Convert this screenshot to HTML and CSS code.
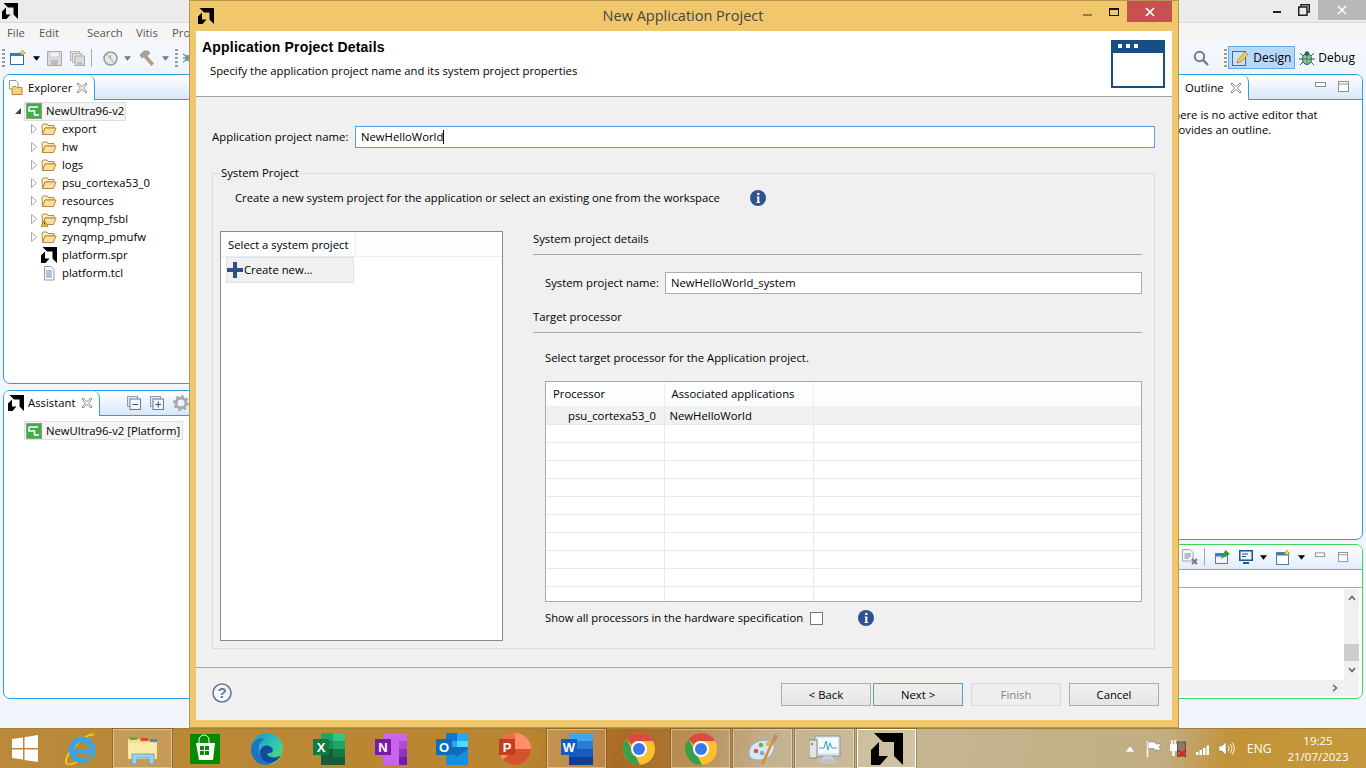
FILE: index.html
```html
<!DOCTYPE html>
<html lang="en">
<head>
<meta charset="utf-8">
<title>New Application Project</title>
<link rel="stylesheet" href="styles.css">
</head>
<body>
<svg class="defs" width="0" height="0" aria-hidden="true">
  <defs>
    <symbol id="amd" viewBox="0 0 32 32"><path d="M3 0H32V32L23 23V9H12Z"/><path d="M0 32V17L8 9V23H17L9 32Z"/></symbol>
    <symbol id="folder" viewBox="0 0 16 16"><path d="M1 4.500 2 3h4l1 1.500h6V7H4L1.500 13.500Z" fill="#fdeec8" stroke="#b58a3c"/><path d="M1.500 13.500 4 7h11l-2.500 6.500Z" fill="#fbdf9f" stroke="#b58a3c"/></symbol>
    <symbol id="platform" viewBox="0 0 16 16"><rect width="16" height="16" fill="#8e9a8e"/><rect x="1" y="1" width="14" height="14" fill="#3fae49"/><path d="M3 4H12M3 4V8H8.500V12H13" fill="none" stroke="#fff" stroke-width="1.500"/></symbol>
    <symbol id="arrow" viewBox="0 0 8 12"><path d="M1.500 1.500 6.500 6 1.500 10.500Z" fill="#fff" stroke="#a8a8a8"/></symbol>
    <symbol id="close" viewBox="0 0 12 12"><path d="M2 1 6 4.500 10 1 11 2 7.500 6 11 10 10 11 6 7.500 2 11 1 10 4.500 6 1 2Z" fill="#fff" stroke="#8a8a8a"/></symbol>
    <symbol id="drop" viewBox="0 0 8 5"><path d="M0 0H8L4 5Z"/></symbol>
    <symbol id="info" viewBox="0 0 16 16"><circle cx="8" cy="8" r="8" fill="#2f5392"/><circle cx="8.300" cy="4" r="1.300" fill="#fff"/><path d="M6.800 6.500H9.300V12H10V13H6.500V12H7.300V7.500H6.800Z" fill="#fff"/></symbol>
    <symbol id="viewmin" viewBox="0 0 12 10"><rect x=".5" y=".5" width="10" height="4" fill="#fff" stroke="#8e8e8e"/></symbol>
    <symbol id="viewmax" viewBox="0 0 12 12"><rect x=".5" y=".5" width="10" height="10" fill="#fff" stroke="#8e8e8e"/><path d="M1 3H10" stroke="#8e8e8e"/></symbol>
    <symbol id="chrome" viewBox="0 0 32 32"><circle cx="16" cy="16" r="16" fill="#fbc02d"/><path d="M16 0A16 16 0 0 1 30 8H16A8 8 0 0 0 8.500 12L3.500 6A16 16 0 0 1 16 0Z" fill="#dd4b3e"/><path d="M3.500 6 10 18 17 31.900A16 16 0 0 1 3.500 6Z" fill="#3a9f4c"/><circle cx="16" cy="16" r="8" fill="#fff"/><circle cx="16" cy="16" r="6" fill="#3b78e7"/></symbol>
  </defs>
</svg>

<main class="desktop">
  <section class="ide">
    <header class="ide-title">
      <svg class="ide-logo" width="16" height="16"><use href="#amd"/></svg>
      <div class="ide-controls">
        <span class="ctl-min"></span>
        <svg class="ctl-restore" width="12" height="12" viewBox="0 0 12 12"><path d="M3 2.500V.75H11.250V8H9M.75 3H9V11.250H.75Z" fill="none" stroke="#222" stroke-width="1.500"/></svg>
        <span class="ctl-close"><svg width="10" height="10" viewBox="0 0 10 10"><path d="M1 1 9 9M9 1 1 9" stroke="#fff" stroke-width="1.500"/></svg></span>
      </div>
    </header>
    <nav class="ide-menu">
      <span class="m-file">File</span><span class="m-edit">Edit</span><span class="m-search">Search</span><span class="m-vitis">Vitis</span><span>Project</span>
    </nav>
    <div class="ide-toolbar">
      <div class="tools-left">
        <span class="grip"></span>
        <svg width="16" height="16" viewBox="0 0 16 16"><rect x=".5" y="3.500" width="13" height="11" fill="#fff" stroke="#2e6da4"/><rect x="1" y="3.500" width="12" height="2.500" fill="#3b7cba"/><path d="M12.500 0 13.500 2 15.500 3 13.500 4 12.500 6 11.500 4 9.500 3 11.500 2Z" fill="#f5d66a" stroke="#a8863a" stroke-width=".6"/></svg>
        <svg width="7" height="5"><use href="#drop"/></svg>
        <svg width="15" height="15" viewBox="0 0 15 15"><path d="M.5.5H14.500V14.500H.5Z" fill="#dcdcdc" stroke="#a9a9a9"/><rect x="3" y="1" width="9" height="5" fill="#f5f5f5" stroke="#b5b5b5" stroke-width=".6"/><rect x="4" y="9" width="7" height="5" fill="#bcbcbc"/></svg>
        <svg width="15" height="15" viewBox="0 0 15 15"><rect x=".5" y=".5" width="9" height="9" fill="#e4e4e4" stroke="#b5b5b5"/><rect x="2.500" y="2.500" width="9" height="9" fill="#e4e4e4" stroke="#b5b5b5"/><rect x="5" y="5" width="9.500" height="9.500" fill="#dcdcdc" stroke="#a9a9a9"/><rect x="7.500" y="11" width="4.500" height="3.500" fill="#bcbcbc"/></svg>
        <span class="tool-sep"></span>
        <svg width="15" height="15" viewBox="0 0 15 15"><circle cx="7.500" cy="7.500" r="6.500" fill="#e8e8e8" stroke="#9a9a9a" stroke-width="1.500"/><path d="M3 3 12 12M7.500 4V8L10 10" stroke="#a5a5a5" fill="none"/></svg>
        <svg width="7" height="5" class="dim"><use href="#drop"/></svg>
        <svg width="16" height="16" viewBox="0 0 16 16"><path d="M1 5 5 1H9L11 3 8 6 14.500 13.500 12.500 15.500 6 8 4.500 7 3 8Z" fill="#a8a296" stroke="#8a7f6c" stroke-width=".6"/><path d="M8 7 14.500 13.500 12.500 15.500 6.500 9Z" fill="#c09a72"/></svg>
        <svg width="7" height="5" class="dim"><use href="#drop"/></svg>
        <span class="grip"></span>
        <svg width="10" height="14" viewBox="0 0 10 14"><circle cx="5" cy="7" r="3" fill="#6c9a84"/><path d="M0 3 3 5M0 11 3 9M0 7H2" stroke="#3b6b58"/></svg>
      </div>
      <div class="tools-right">
        <svg class="search" width="16" height="16" viewBox="0 0 16 16"><circle cx="6.500" cy="6.500" r="4.700" fill="none" stroke="#7a7a7a" stroke-width="2"/><path d="M10 10 15 15" stroke="#7a7a7a" stroke-width="2.400"/></svg>
        <span class="grip grip-right"></span>
        <span class="persp persp-on">
          <svg width="18" height="18" viewBox="0 0 18 18"><rect x=".5" y="2.500" width="13" height="14" fill="#cfe3f7" stroke="#3f6ea3"/><path d="M5 14 6 10.500 13 3 16 5.500 9 13Z" fill="#f3c85f" stroke="#9c7a2c" stroke-width=".7"/></svg>
          Design
        </span>
        <span class="persp">
          <svg width="16" height="16" viewBox="0 0 16 16"><path d="M1 3 4 6M15 3 12 6M0 9H3M13 9H16M1 15 4 12M15 15 12 12" stroke="#2f6048"/><ellipse cx="8" cy="9" rx="4.500" ry="5.500" fill="#86c79a" stroke="#2f6048"/><circle cx="8" cy="3.500" r="2.200" fill="#2f6048"/><path d="M8 5V14M4 9H12" stroke="#2f6048" stroke-width=".7"/></svg>
          Debug
        </span>
      </div>
    </div>

    <div class="workspace">
      <div class="stack">
        <article class="panel panel-explorer">
          <div class="panel-head">
            <div class="tab">
              <svg width="16" height="16" viewBox="0 0 16 16"><path d="M1.500.5H8L10 2.500V9H1.500Z" fill="#fff" stroke="#8a9ab0"/><path d="M4 8 5 6.500H8L9 7.500H14V14.500H4Z" fill="#f6d27e" stroke="#b58a3c"/></svg>
              <span>Explorer</span>
              <svg class="x" width="12" height="12"><use href="#close"/></svg>
            </div>
          </div>
          <div class="tree">
            <div class="tree-root">
              <svg class="twist" width="6" height="6" viewBox="0 0 6 6"><path d="M6 0V6H0Z" fill="#444"/></svg>
              <span class="selected"><svg width="16" height="16"><use href="#platform"/></svg>NewUltra96-v2</span>
            </div>
            <div class="tree-item"><svg class="ar" width="8" height="12"><use href="#arrow"/></svg><svg width="16" height="16"><use href="#folder"/></svg><span>export</span></div>
            <div class="tree-item"><svg class="ar" width="8" height="12"><use href="#arrow"/></svg><svg width="16" height="16"><use href="#folder"/></svg><span>hw</span></div>
            <div class="tree-item"><svg class="ar" width="8" height="12"><use href="#arrow"/></svg><svg width="16" height="16"><use href="#folder"/></svg><span>logs</span></div>
            <div class="tree-item"><svg class="ar" width="8" height="12"><use href="#arrow"/></svg><svg width="16" height="16"><use href="#folder"/></svg><span>psu_cortexa53_0</span></div>
            <div class="tree-item"><svg class="ar" width="8" height="12"><use href="#arrow"/></svg><svg width="16" height="16"><use href="#folder"/></svg><span>resources</span></div>
            <div class="tree-item"><svg class="ar" width="8" height="12"><use href="#arrow"/></svg><svg width="16" height="16" viewBox="0 0 16 16"><use href="#folder"/><path d="M3.500 9 7 15.500H0Z" fill="#f2c230" stroke="#8a6d1c" stroke-width=".6"/><path d="M3.500 11.500V13.500" stroke="#333"/></svg><span>zynqmp_fsbl</span></div>
            <div class="tree-item"><svg class="ar" width="8" height="12"><use href="#arrow"/></svg><svg width="16" height="16"><use href="#folder"/></svg><span>zynqmp_pmufw</span></div>
            <div class="tree-item"><i class="ar-blank"></i><svg width="16" height="16"><use href="#amd"/></svg><span>platform.spr</span></div>
            <div class="tree-item"><i class="ar-blank"></i><svg width="16" height="16" viewBox="0 0 16 16"><path d="M3.500 1.500H10L13 4.500V15H3.500Z" fill="#fff" stroke="#8a9ab8"/><path d="M5 6H11M5 8H11M5 10H11M5 12H11" stroke="#6c86b0"/></svg><span>platform.tcl</span></div>
          </div>
        </article>
        <article class="panel panel-assistant">
          <div class="panel-head">
            <div class="tab tab-assistant">
              <svg width="16" height="16"><use href="#amd"/></svg>
              <span>Assistant</span>
              <svg class="x" width="12" height="12"><use href="#close"/></svg>
            </div>
            <div class="view-tools">
              <svg width="14" height="14" viewBox="0 0 14 14"><rect x=".5" y=".5" width="10" height="10" fill="#dfe8f2" stroke="#8a9fb8"/><rect x="3" y="3" width="10.500" height="10.500" fill="#f4f7fb" stroke="#5f7ea3"/><path d="M5.500 8.500H11" stroke="#2f5392"/></svg>
              <svg width="14" height="14" viewBox="0 0 14 14"><rect x=".5" y=".5" width="10" height="10" fill="#dfe8f2" stroke="#8a9fb8"/><rect x="3" y="3" width="10.500" height="10.500" fill="#f4f7fb" stroke="#5f7ea3"/><path d="M5.500 8.500H11M8.250 5.500V11.500" stroke="#2f5392"/></svg>
              <svg width="16" height="16" viewBox="0 0 16 16"><circle cx="8" cy="8" r="5" fill="none" stroke="#a8a8a8" stroke-width="3"/><circle cx="8" cy="8" r="7" fill="none" stroke="#a8a8a8" stroke-width="2" stroke-dasharray="2.500 3"/></svg>
            </div>
          </div>
          <div class="assistant-body">
            <span class="selected sel-wide"><svg width="16" height="16"><use href="#platform"/></svg>NewUltra96-v2 [Platform]</span>
          </div>
        </article>
      </div>

      <div class="stack stack-right">
        <article class="panel panel-outline">
          <div class="panel-head">
            <div class="tab tab-outline">
              <span>Outline</span>
              <svg class="x" width="12" height="12"><use href="#close"/></svg>
            </div>
            <div class="view-btns">
              <svg width="12" height="10"><use href="#viewmin"/></svg>
              <svg width="12" height="12"><use href="#viewmax"/></svg>
            </div>
          </div>
          <p class="outline-msg">There is no active editor that provides an outline.</p>
        </article>
        <article class="panel panel-console">
          <div class="console-head">
            <svg width="17" height="16" viewBox="0 0 17 16"><path d="M.5.5H8L11 3.500V12H.5Z" fill="#f6f6f6" stroke="#9aa7bd"/><path d="M2.500 5H9M2.500 7H9M2.500 9H7" stroke="#6c86b0"/><path d="M10 10 15 15M15 10 10 15" stroke="#777" stroke-width="2"/></svg>
            <span class="tool-sep tall"></span>
            <svg width="15" height="14" viewBox="0 0 15 14"><rect x=".5" y="3.500" width="12" height="10" fill="#f4f7fb" stroke="#4b7fb0"/><rect x="1" y="4" width="11" height="2.500" fill="#3b7cba"/><path d="M5 9 8 5.500 9 2.500 10.500 0 15 4 12 5.500 9.500 7Z" fill="#2e9b3f"/></svg>
            <svg width="14" height="14" viewBox="0 0 14 14"><rect x=".75" y=".75" width="12.500" height="9.500" fill="#eaf1f8" stroke="#22558c" stroke-width="1.500"/><path d="M3 4H9M3 6.500H7" stroke="#22558c"/><path d="M4 13H10" stroke="#22558c" stroke-width="2"/></svg>
            <svg width="7" height="5"><use href="#drop"/></svg>
            <svg width="15" height="15" viewBox="0 0 15 15"><rect x=".5" y="2.500" width="12" height="12" fill="#fff" stroke="#4b7fb0"/><rect x="1" y="3" width="11" height="2.500" fill="#3b7cba"/><path d="M11 0 12 2 14 3 12 4 11 6 10 4 8 3 10 2Z" fill="#f5d66a" stroke="#a8863a" stroke-width=".6"/></svg>
            <svg width="7" height="5"><use href="#drop"/></svg>
            <svg width="11" height="10"><use href="#viewmin"/></svg>
            <svg width="11" height="11"><use href="#viewmax"/></svg>
          </div>
          <div class="console-sub"></div>
          <div class="console-main">
            <div class="console-view">
              <div class="console-text"></div>
              <div class="vscroll">
                <svg width="8" height="6" viewBox="0 0 8 6"><path d="M1 5 4 1.500 7 5" fill="none" stroke="#666" stroke-width="1.600"/></svg>
                <span class="vthumb"></span>
                <svg width="8" height="6" viewBox="0 0 8 6"><path d="M1 1 4 4.500 7 1" fill="none" stroke="#666" stroke-width="1.600"/></svg>
              </div>
            </div>
            <div class="hscroll"><svg width="6" height="8" viewBox="0 0 6 8"><path d="M1 1 4.500 4 1 7" fill="none" stroke="#666" stroke-width="1.600"/></svg></div>
          </div>
        </article>
      </div>
    </div>
  </section>

  <section class="taskbar">
    <div class="start"><svg width="26" height="27" viewBox="0 0 26 27"><path d="M0 4 11 2.500V13H0ZM12.500 2.200 26 0V13H12.500ZM0 14.500H11V24.500L0 23ZM12.500 14.500H26V27L12.500 25Z" fill="#fff"/></svg></div>
    <div class="task">
      <svg width="32" height="32" viewBox="0 0 32 32"><path d="M29 2C25 0 18 5 10 13 3 20 -1 28 2 31 5 33 12 29 17 25" fill="none" stroke="#f3c515" stroke-width="2"/><circle cx="17" cy="17" r="10.500" fill="none" stroke="#38a5e6" stroke-width="5.500"/><path d="M9 16.500H27V20H9Z" fill="#38a5e6"/><path d="M20 25H30L28 21H21Z" fill="#38a5e6"/><path d="M18 26 25 21 28 22 22 27Z" fill="#b98a3a"/></svg>
    </div>
    <div class="task run">
      <svg width="32" height="32" viewBox="0 0 32 32"><path d="M1 6H12L14 8H30V26H1Z" fill="#f3dc94"/><path d="M3 4H10V7H3Z" fill="#4fb34f"/><path d="M14 5H21V8H14Z" fill="#d64a3a"/><path d="M23 6H30V9H23Z" fill="#3a8fd6"/><path d="M1 10H30L29 26H2Z" fill="#fbeaa8"/><path d="M5 31V21H27V31H22V25H10V31Z" fill="#9cd0ec" stroke="#4f93bf" stroke-width=".7"/></svg>
    </div>
    <div class="task">
      <svg width="30" height="30" viewBox="0 0 30 30"><rect width="30" height="30" fill="#078a00"/><path d="M9 9V6A5 5 0 0 1 19 6V9" fill="none" stroke="#fff"/><path d="M6 9H25L23 26H9Z" fill="#fff"/><path d="M10 12H14V16H10ZM15 12H19V16H15ZM10 17H14V21H10ZM15 17H19V21H15Z" fill="#078a00"/></svg>
    </div>
    <div class="task">
      <svg width="32" height="32" viewBox="0 0 32 32"><defs><linearGradient id="edgeA" x1="0" y1="0" x2="1" y2="1"><stop offset="0" stop-color="#1f8fd0"/><stop offset=".55" stop-color="#30c6b0"/><stop offset="1" stop-color="#74d94a"/></linearGradient></defs><circle cx="16" cy="16" r="16" fill="url(#edgeA)"/><path d="M0 16C0 8 8 4 14 6 9 8 7 12 8 18 9 26 18 29 26 26 22 30 18 32 15 32 6 32 0 25 0 16Z" fill="#1b74c4"/><path d="M9 19C9 13 17 10 21 15 23 18 21 20 18 20 15 20 16 23 20 24 24 25 28 24 30 22 27 28 21 31 15 29 11 27 9 23 9 19Z" fill="#124a9c"/></svg>
    </div>
    <div class="task">
      <svg width="32" height="32" viewBox="0 0 32 32"><rect x="8" width="24" height="32" fill="#21a366"/><rect x="20" width="12" height="8" fill="#33c481"/><rect x="20" y="8" width="12" height="8" fill="#21a366"/><rect x="8" y="8" width="12" height="8" fill="#1b8a55"/><rect x="20" y="16" width="12" height="8" fill="#107c41"/><rect x="8" y="16" width="12" height="16" fill="#185c37"/><rect x="20" y="24" width="12" height="8" fill="#185c37"/><rect y="6" width="16" height="16" fill="#107c41"/><text class="app-letter" x="8" y="19">X</text></svg>
    </div>
    <div class="task">
      <svg width="32" height="32" viewBox="0 0 32 32"><rect x="8" width="24" height="32" fill="#ca64ea"/><rect x="24" y="8" width="8" height="8" fill="#ae4bd5"/><rect x="24" y="16" width="8" height="8" fill="#9332bf"/><rect x="24" y="24" width="8" height="8" fill="#7719aa"/><rect y="6" width="16" height="16" fill="#7719aa"/><text class="app-letter" x="8" y="19">N</text></svg>
    </div>
    <div class="task">
      <svg width="34" height="32" viewBox="0 0 34 32"><rect x="10" width="22" height="16" fill="#0a78d4"/><rect x="21" width="11" height="8" fill="#28a8ea"/><rect x="10" y="8" width="11" height="8" fill="#28a8ea"/><rect x="21" y="8" width="11" height="8" fill="#50d9ff"/><path d="M10 14H32V32H10Z" fill="#0f6cbd"/><path d="M10 16 21 24 32 16V32H10Z" fill="#1490df"/><rect y="6" width="16" height="16" fill="#0f6cbd"/><text class="app-letter" x="8" y="19">O</text></svg>
    </div>
    <div class="task">
      <svg width="32" height="32" viewBox="0 0 32 32"><circle cx="16" cy="16" r="16" fill="#ff8f6b"/><path d="M16 16H32A16 16 0 0 1 4 26.500L16 16Z" fill="#d35230"/><path d="M16 16V0A16 16 0 0 0 0 16Z" fill="#ed6c47"/><rect y="6" width="16" height="16" fill="#c43e1c"/><text class="app-letter" x="8" y="19">P</text></svg>
    </div>
    <div class="task run">
      <svg width="32" height="32" viewBox="0 0 32 32"><rect x="8" width="24" height="8" fill="#41a5ee"/><rect x="8" y="8" width="24" height="8" fill="#2b7cd3"/><rect x="8" y="16" width="24" height="8" fill="#185abd"/><rect x="8" y="24" width="24" height="8" fill="#103f91"/><rect y="6" width="16" height="16" fill="#185abd"/><text class="app-letter" x="8" y="19">W</text></svg>
    </div>
    <div class="task"><svg width="32" height="32"><use href="#chrome"/></svg></div>
    <div class="task run"><svg width="32" height="32"><use href="#chrome"/></svg></div>
    <div class="task run">
      <svg width="32" height="32" viewBox="0 0 32 32"><path d="M2 19C2 11 14 5 22 8 29 11 28 17 24 22 19 28 8 28 4 25 2 24 2 21 2 19Z" fill="#d5e7f5" stroke="#8fb0cc"/><circle cx="9" cy="18" r="2.300" fill="#d85a46"/><circle cx="14" cy="12" r="2.300" fill="#6fb04a"/><circle cx="21" cy="11" r="2.300" fill="#e5b73b"/><circle cx="15" cy="20" r="2.300" fill="#8da9c2"/><path d="M14 31 25 7 27 8 17 31Z" fill="#dd8c2c"/><path d="M25 8 28 1 31 3 28 9Z" fill="#b98c5c"/></svg>
    </div>
    <div class="task run">
      <svg width="32" height="32" viewBox="0 0 32 32"><rect x="6" y="3" width="25" height="20" fill="#dfe6ec" stroke="#8b98a4"/><rect x="9" y="5" width="20" height="15" fill="#f4fbff"/><path d="M10 15H15L17 8 19 17 21 10 23 15H28" fill="none" stroke="#3a9bd6"/><path d="M11 28 15 23H22L27 28Z" fill="#c9cfd4"/><ellipse cx="18" cy="28.500" rx="9" ry="2.500" fill="#bcc3c9"/><rect y="7" width="8" height="18" fill="#e4e4e4" stroke="#888"/><circle cx="3" cy="11" r="1.200" fill="#4db34d"/></svg>
    </div>
    <div class="task run run-top"><svg width="32" height="32"><use href="#amd"/></svg></div>

    <div class="tray">
      <svg width="10" height="6" viewBox="0 0 10 6"><path d="M0 6 5 0 10 6Z" fill="#fff" stroke="#8a8a8a" stroke-width=".5"/></svg>
      <svg width="16" height="16" viewBox="0 0 16 16"><path d="M1.500 0V16" stroke="#fff" stroke-width="1.500"/><path d="M2 1H9L10 3H15.500L13 6 15 9H9L8 7.500H2Z" fill="#fff" stroke="#555" stroke-width=".4"/></svg>
      <svg width="17" height="17" viewBox="0 0 17 17"><path d="M2 0V4M5 0V4" stroke="#fff" stroke-width="1.500"/><rect x="0" y="4" width="7" height="7" fill="#fff"/><path d="M3.500 10V16" stroke="#fff" stroke-width="2.500"/><rect x="7.500" y="2" width="8" height="14" fill="#8a7a62" stroke="#5d5346"/><path d="M8 10 16 17M16 10 8 17" stroke="#e02020" stroke-width="2"/></svg>
      <svg width="15" height="12" viewBox="0 0 15 12"><path d="M0 9H2.500V12H0ZM3.500 7H6V12H3.500ZM7 5H9.500V12H7ZM10.500 2.500H13V12H10.500Z" fill="#fff"/></svg>
      <svg width="16" height="15" viewBox="0 0 16 15"><path d="M0 5H3L7 1V14L3 10H0Z" fill="#fff" stroke="#777" stroke-width=".5"/><path d="M9 5C10.500 6.500 10.500 8.500 9 10M11 3C13.500 6 13.500 9 11 12M13 1.500C16 5 16 10 13 13.500" fill="none" stroke="#fff"/></svg>
      <span class="lang">ENG</span>
      <span class="clock"><span>19:25</span><span>21/07/2023</span></span>
    </div>
  </section>

  <section class="dialog" aria-label="New Application Project">
    <header class="dlg-title">
      <svg class="dlg-logo" width="16" height="16"><use href="#amd"/></svg>
      <span class="dlg-name">New Application Project</span>
      <div class="dlg-controls">
        <span class="dlg-min"></span>
        <span class="dlg-max"></span>
        <span class="dlg-close"><svg width="10" height="10" viewBox="0 0 10 10"><path d="M1 1 9 9M9 1 1 9" stroke="#fff" stroke-width="1.700"/></svg></span>
      </div>
    </header>
    <div class="dlg-inner">
      <div class="dlg-banner">
        <div class="banner-text">
          <h1>Application Project Details</h1>
          <p>Specify the application project name and its system project properties</p>
        </div>
        <svg class="banner-icon" width="54" height="48" viewBox="0 0 54 48"><rect x="1" y="1" width="52" height="46" fill="#fff" stroke="#174f85" stroke-width="2"/><rect width="54" height="13" fill="#174f85"/><path d="M7 4H11V8H7ZM15 4H19V8H15ZM23 4H27V8H23Z" fill="#fff"/></svg>
      </div>
      <div class="dlg-body">
        <div class="name-row">
          <label>Application project name:</label>
          <div class="input input-focus"><span>NewHelloWorld</span><i class="caret"></i></div>
        </div>
        <fieldset class="sys">
          <legend>System Project</legend>
          <div class="sys-intro">
            <span>Create a new system project for the application or select an existing one from the workspace</span>
            <svg width="16" height="16"><use href="#info"/></svg>
          </div>
          <div class="sys-cols">
            <div class="list">
              <div class="list-head"><span>Select a system project</span></div>
              <div class="list-row">
                <svg width="16" height="16" viewBox="0 0 16 16"><path d="M6 0H10V6H16V10H10V16H6V10H0V6H6Z" fill="#2f4f86"/></svg>
                <span>Create new...</span>
              </div>
            </div>
            <div class="details">
              <div class="sec-title">System project details</div>
              <div class="sys-name">
                <label>System project name:</label>
                <div class="input"><span>NewHelloWorld_system</span></div>
              </div>
              <div class="sec-title sec-second">Target processor</div>
              <p class="select-note">Select target processor for the Application project.</p>
              <div class="proc-wrap">
                <table class="proc">
                  <colgroup><col class="c1"><col class="c2"><col></colgroup>
                  <thead><tr><th>Processor</th><th>Associated applications</th><th></th></tr></thead>
                  <tbody>
                    <tr class="sel"><td class="indent">psu_cortexa53_0</td><td>NewHelloWorld</td><td></td></tr>
                    <tr><td></td><td></td><td></td></tr>
                    <tr><td></td><td></td><td></td></tr>
                    <tr><td></td><td></td><td></td></tr>
                    <tr><td></td><td></td><td></td></tr>
                    <tr><td></td><td></td><td></td></tr>
                    <tr><td></td><td></td><td></td></tr>
                    <tr><td></td><td></td><td></td></tr>
                    <tr><td></td><td></td><td></td></tr>
                    <tr><td></td><td></td><td></td></tr>
                    <tr><td></td><td></td><td></td></tr>
                  </tbody>
                </table>
              </div>
              <div class="show-all">
                <span>Show all processors in the hardware specification</span>
                <i class="check"></i>
                <svg width="16" height="16"><use href="#info"/></svg>
              </div>
            </div>
          </div>
        </fieldset>
      </div>
      <footer class="dlg-foot">
        <svg width="20" height="20" viewBox="0 0 20 20"><circle cx="10" cy="10" r="9" fill="#f5f7fa" stroke="#5f7a9a" stroke-width="1.600"/><text class="help-q" x="10" y="15">?</text></svg>
        <div class="btns">
          <button>&lt; Back</button>
          <button class="primary">Next &gt;</button>
          <button class="off" disabled>Finish</button>
          <button>Cancel</button>
        </div>
      </footer>
    </div>
  </section>
</main>
</body>
</html>
```
FILE: styles.css
```css
* { box-sizing: border-box; }
html, body { margin: 0; padding: 0; }
body {
  width: 1366px;
  height: 768px;
  overflow: hidden;
  font-family: "Open Sans", "Liberation Sans", sans-serif;
  font-size: 11.3px;
  line-height: 16px;
  color: #000;
}
svg { display: block; flex: none; }
.defs { position: absolute; }
.desktop { position: relative; width: 1366px; height: 768px; display: flex; flex-direction: column; }

/* background IDE */
.ide { height: 728px; background: #f1f6fd; display: flex; flex-direction: column; }
.ide-title { height: 23px; background: #ebebeb; border-bottom: 1px solid #d9d9d9; display: flex; justify-content: space-between; }
.ide-logo { margin: 3px 0 0 2px; }
.ide-controls { display: flex; align-items: flex-start; }
.ctl-min { width: 8px; height: 2px; background: #222; margin: 11px 17px 0 0; }
.ctl-restore { margin: 4px 8px 0 0; }
.ctl-close { width: 48px; height: 20px; background: #b8b8b8; display: flex; align-items: center; justify-content: center; }
.ide-menu { height: 19px; background: #f5f5f5; color: #555; display: flex; align-items: center; padding-left: 7px; }
.m-file { width: 32px; }
.m-edit { width: 48px; }
.m-search { width: 49px; }
.m-vitis { width: 36px; }
.ide-toolbar { height: 32px; background: linear-gradient(#f5f8fd, #f0f5fc); display: flex; justify-content: space-between; align-items: center; padding: 0 5px 0 2px; }
.tools-left {
  display: grid;
  grid-template-columns: 8px 23px 14px 23px 21px 12px 21px 15px 23px 13px 8px auto;
  align-items: center;
}
.dim { fill: #777; }
.grip { width: 3px; height: 18px; background: repeating-linear-gradient(#9a9a9a 0 2px, transparent 2px 4px); }
.tool-sep { width: 1px; height: 18px; background: #a9a9a9; }
.tool-sep.tall { height: 18px; }
.tools-right { display: flex; align-items: center; margin-top: -1px; }
.search { margin-right: 15px; }
.grip-right { margin-right: 1px; }
.persp { display: flex; align-items: center; gap: 3px; height: 23px; padding: 0 6px 0 3px; font-size: 12px; }
.persp-on { width: 67px; background: #b7d9f9; border: 1px solid #6aa6e0; margin-right: 1px; }

.workspace { flex: 1; display: flex; justify-content: space-between; padding: 0 3px 29px; }
.stack { width: 240px; display: flex; flex-direction: column; gap: 6px; }
.stack-right { width: 203px; gap: 4px; }
.panel { background: #fff; border: 1px solid #2b9fe6; border-radius: 7px; display: flex; flex-direction: column; overflow: hidden; }
.panel-explorer { height: 310px; }
.panel-assistant { height: 309px; }
.panel-outline { height: 466px; }
.panel-console { height: 155px; border-color: #3fd75a; }
.panel-head { height: 25px; background: linear-gradient(#fff, #d9e7f9); display: flex; justify-content: space-between; border-bottom: 1px solid #2b9fe6; }
.tab { width: 91px; height: 25px; background: #fff; border-right: 1px solid #2b9fe6; border-radius: 0 7px 0 0; display: flex; align-items: center; padding-left: 4px; gap: 4px; }
.tab .x { margin: 0 6px 0 auto; }
.tab-assistant { width: 96px; padding-bottom: 1px; }
.view-tools { display: flex; align-items: center; gap: 9px; margin-right: 53px; }
.tab-outline { width: 88px; padding-left: 24px; }
.view-btns { display: flex; align-items: center; gap: 11px; margin-right: 12px; }

.tree { padding-top: 2px; }
.tree-root { height: 18px; display: flex; align-items: center; padding-left: 11px; }
.twist { margin-right: 3px; }
.selected { display: flex; align-items: center; gap: 4px; height: 19px; padding: 0 1px; background: #f5f5f5; border: 1px solid #dedede; }
.sel-wide { padding-right: 2px; }
.tree-item { height: 18px; display: flex; align-items: center; padding-left: 26px; }
.tree-item .ar, .ar-blank { width: 8px; margin-right: 3px; }
.tree-item span { margin-left: 5px; }
.assistant-body { padding: 5px 0 0 20px; display: flex; }

.outline-msg { margin: 7px 0 0 6px; width: 170px; line-height: 15px; }

.console-head { height: 25px; background: linear-gradient(#fff, #e2ecfa); border-bottom: 1px solid #3fd75a; display: grid; grid-template-columns: 22px 11px 24px 21px 16px 22px 17px 23px 11px; align-items: center; padding-left: 21px; }
.console-sub { height: 18px; border-bottom: 1px solid #a9a9a9; flex: none; }
.console-main { flex: 1; display: flex; flex-direction: column; margin-right: 3px; padding-bottom: 2px; min-height: 0; }
.console-view { flex: 1; display: flex; min-height: 0; }
.console-text { flex: 1; }
.vscroll { width: 15px; background: #f0f0f0; display: flex; flex-direction: column; align-items: center; padding: 6px 0 7px; margin-top: 1px; }
.vthumb { width: 15px; height: 17px; background: #cdcdcd; margin-top: auto; margin-bottom: 6px; }
.hscroll { height: 16px; background: #f0f0f0; display: flex; align-items: center; justify-content: flex-end; padding-right: 21px; flex: none; }

/* taskbar */
.taskbar {
  height: 40px;
  display: flex;
  align-items: center;
  background: linear-gradient(100deg, #b98a3a 0, #bb8530 520px, #a96b24 620px, #ad7a35 690px, #b8a27a 760px, #c6b591 900px, #c2ad84 1150px, #c29336 1215px, #c69a3e 1366px);
  border-top: 1px solid #a38038;
}
.start { width: 51px; padding-left: 12px; }
.task { width: 59px; height: 39px; margin-right: 3px; display: flex; align-items: center; justify-content: center; border: 1px solid transparent; }
.task.run { background: rgba(255, 255, 255, .16); border: 1.500px solid rgba(255, 240, 210, .45); outline: 1px solid rgba(90, 60, 20, .35); }
.task.run-top { background: rgba(255, 255, 255, .2); border: 1.500px solid #fff; }
.app-letter { font-family: "Liberation Sans", sans-serif; font-weight: 700; font-size: 13px; fill: #fff; text-anchor: middle; }
.tray { flex: 1; display: flex; align-items: center; justify-content: flex-end; color: #fff; }
.tray svg:nth-child(1) { margin-right: 11px; }
.tray svg:nth-child(2) { margin-right: 8px; }
.tray svg:nth-child(3) { margin-right: 9px; }
.tray svg:nth-child(4) { margin-right: 8px; }
.lang { font-size: 12px; margin-left: 12px; width: 24px; }
.clock { width: 94px; margin-right: 1px; padding-top: 1px; display: flex; flex-direction: column; align-items: center; font-size: 11.500px; line-height: 16px; }

/* dialog window */
.dialog {
  position: absolute;
  left: 189px;
  top: 0;
  width: 990px;
  height: 728px;
  background: #f0c86b;
  border: 1px solid #b5964f;
  padding: 0 6px 7px;
  display: flex;
  flex-direction: column;
}
.dlg-title { height: 30px; position: relative; display: flex; align-items: center; justify-content: center; flex: none; }
.dlg-logo { position: absolute; left: 2px; top: 7px; }
.dlg-name { font-size: 14.500px; color: #444; margin-left: -2px; }
.dlg-controls { position: absolute; right: 0; top: 0; display: flex; align-items: flex-start; }
.dlg-min { width: 9px; height: 2px; background: #8a7a4c; margin: 13px 17px 0 0; }
.dlg-max { width: 10px; height: 8px; border: 1px solid #111; border-top-width: 2px; margin: 7px 8px 0 0; }
.dlg-close { width: 45px; height: 21px; background: #c75050; display: flex; align-items: center; justify-content: center; }
.dlg-inner { flex: 1; background: #f0f0f0; display: flex; flex-direction: column; min-height: 0; }
.dlg-banner { height: 66px; background: #fff; border-bottom: 1px solid #a0a0a0; padding: 8px 7px 0 6px; display: flex; justify-content: space-between; flex: none; }
.banner-text h1 { margin: 0; font-family: "Liberation Sans", sans-serif; font-size: 14px; letter-spacing: .2px; line-height: 16px; font-weight: 700; }
.banner-text p { margin: 8px 0 0 8px; }
.banner-icon { margin-top: 1px; }
.dlg-body { height: 570px; padding: 29px 17px 0 16px; flex: none; }
.name-row { height: 22px; display: flex; align-items: center; gap: 5px; }
.name-row label { width: 138px; letter-spacing: .07px; }
.input { flex: 1; height: 22px; background: #fff; border: 1px solid #ababab; display: flex; align-items: center; padding-left: 5px; }
.input-focus { border-color: #569de5; }
.caret { width: 1px; height: 14px; background: #000; }
.sys { margin: 17px 0 0; padding: 0; height: 484px; border: 1px solid #dcdcdc; min-width: 0; }
.sys legend { margin-left: 7px; padding: 0 1px; }
.sys-intro { display: flex; align-items: center; height: 16px; margin-top: 9px; padding-left: 22px; }
.sys-intro span { width: 515px; letter-spacing: -.02px; }
.sys-cols { display: flex; gap: 30px; margin-top: 25px; padding-left: 7px; height: 410px; }
.list { width: 283px; background: #fff; border: 1px solid #8a8a8a; }
.list-head { height: 25px; background: #fcfdff; border-bottom: 1px solid #e6eef9; display: flex; }
.list-head span { width: 135px; padding: 5px 0 0 7px; border-right: 1px solid #e6eef9; }
.list-row { width: 128px; height: 26px; margin-left: 5px; background: #f0f0f0; border: 1px solid #e2e2e2; display: flex; align-items: center; gap: 1px; }
.details { width: 609px; }
.sec-title { height: 24px; border-bottom: 1px solid #a9a9a9; }
.sec-second { margin-top: 15px; }
.sys-name { display: flex; align-items: center; gap: 5px; height: 22px; margin-top: 17px; padding-left: 12px; }
.sys-name label { width: 115px; }
.select-note { margin: 17px 0 0 12px; }
.proc-wrap { height: 221px; margin: 15px 0 0 12px; background: #fff; border: 1px solid #a9a9a9; overflow: hidden; }
.proc { width: 100%; table-layout: fixed; border-collapse: collapse; }
.proc .c1 { width: 118px; }
.proc .c2 { width: 149px; }
.proc th { height: 24px; font-weight: 400; text-align: left; padding: 1px 0 0 7px; background: #fcfdff; border-right: 1px solid #e6eef9; border-bottom: 1px solid #e6eef9; }
.proc th:last-child { border-right: 0; }
.proc td { height: 18px; padding: 1px 0 0 5px; border-right: 1px solid #e8e8e8; border-bottom: 1px solid #e8e8e8; }
.proc td:last-child { border-right: 0; }
.proc .sel td { background: #f1f1f1; }
.proc td.indent { padding-left: 22px; }
.show-all { display: flex; align-items: center; height: 16px; margin: 8px 0 0 12px; }
.show-all span { width: 265px; letter-spacing: -.03px; }
.check { width: 13px; height: 13px; background: #fff; border: 1px solid #777; margin-right: 35px; }
.dlg-foot { flex: 1; border-top: 1px solid #a9a9a9; display: flex; justify-content: space-between; padding: 15px 13px 0 16px; }
.help-q { font-family: "Liberation Sans", sans-serif; font-size: 15px; font-weight: 700; fill: #5f7a9a; text-anchor: middle; }
.btns { display: flex; gap: 2px; }
button {
  width: 90px;
  height: 23px;
  padding: 0;
  font: inherit;
  color: #000;
  background: linear-gradient(#f0f0f0, #e5e5e5);
  border: 1px solid #acacac;
}
button.primary { border-color: #569de5; }
button.off { margin-left: 6px; color: #838383; background: #efefef; border-color: #d9d9d9; }
button.off + button { margin-left: 6px; }
```
